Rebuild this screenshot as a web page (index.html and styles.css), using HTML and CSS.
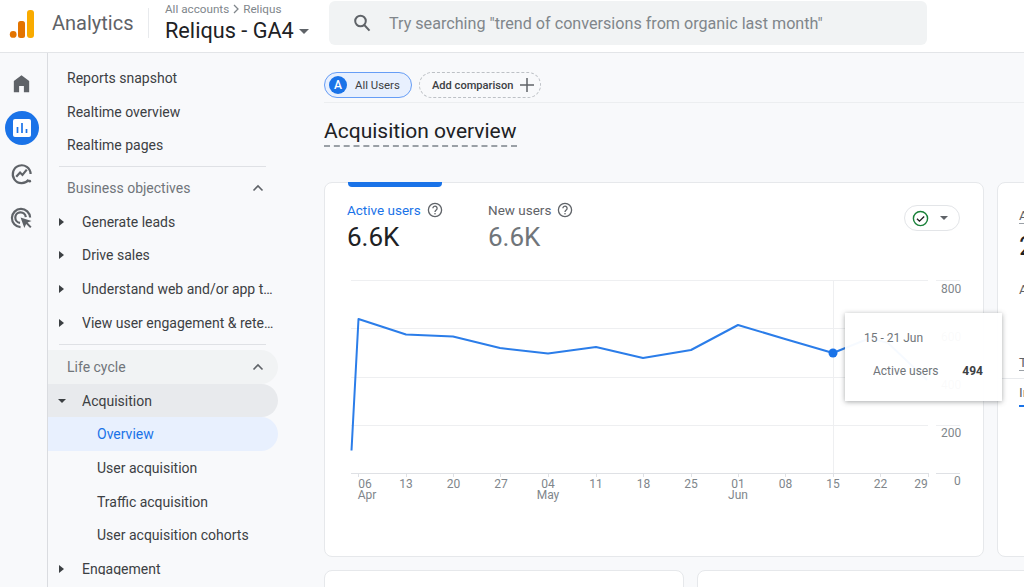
FILE: index.html
```html
<!DOCTYPE html>
<html lang="en">
<head>
<meta charset="utf-8">
<title>Analytics - Acquisition overview</title>
<link rel="stylesheet" href="styles.css">
</head>
<body>
<header class="topbar">
  <div class="brand">
    <svg class="logo" viewBox="0 0 40 44" width="40" height="44"><circle cx="13.2" cy="33.4" r="3.4" fill="#e37400"/><rect x="18" y="20" width="7" height="17" rx="2.5" fill="#e37400"/><rect x="27" y="9" width="7" height="28" rx="3" fill="#f9ab00"/></svg>
    <span class="brand-name">Analytics</span>
  </div>
  <div class="account">
    <div class="crumbs">All accounts <svg class="crumb-sep" viewBox="0 0 8 10" width="8" height="10"><path d="M2 1l4 4-4 4" fill="none" stroke="#80868b" stroke-width="1.3"/></svg> Reliqus</div>
    <div class="property">Reliqus - GA4 <span class="caret"></span></div>
  </div>
  <div class="search">
    <svg viewBox="0 0 22 22" width="22" height="22"><circle cx="9.500" cy="9" r="5.300" fill="none" stroke="#5f6368" stroke-width="2"/><path d="M13.300 13l5.200 5.700" stroke="#5f6368" stroke-width="2"/></svg>
    <span>Try searching "trend of conversions from organic last month"</span>
  </div>
</header>
<div class="body-row">
  <aside class="rail">
    <div class="rail-btn"><svg viewBox="0 0 24 24" width="23" height="23"><path d="M12 3.500L4 9.500V21h5.500v-6.500h5V21H20V9.500z" fill="#5f6368"/></svg></div>
    <div class="rail-btn rail-active"><svg viewBox="0 0 18 18" width="18" height="18"><rect width="18" height="18" rx="2" fill="#fff"/><path d="M4.500 8v6M9 4v10M13.500 10v4" stroke="#1a73e8" stroke-width="1.700"/></svg></div>
    <div class="rail-btn"><svg viewBox="0 0 24 24" width="23" height="23"><path d="M19.500 18.500A9.300 9.300 0 1 1 21.500 12.500" fill="none" stroke="#5f6368" stroke-width="2.300"/><path d="M6.500 15.500l4-4.500 2.500 2.500 4.500-5.500" fill="none" stroke="#5f6368" stroke-width="2.300"/><circle cx="20.500" cy="20" r="1.500" fill="#5f6368"/></svg></div>
    <div class="rail-btn"><svg viewBox="0 0 24 24" width="23" height="23"><path d="M11 21a9.500 9.500 0 1 1 10-10" fill="none" stroke="#5f6368" stroke-width="2.300"/><path d="M10.500 16.500a5.500 5.500 0 1 1 6-6" fill="none" stroke="#5f6368" stroke-width="2.300"/><path d="M11 11l4 11 1.800-4.200L21 22l1.500-1.500-4.200-4.200 4.200-1.800z" fill="#5f6368"/></svg></div>
  </aside>
  <nav class="nav">
    <a class="item">Reports snapshot</a>
    <a class="item">Realtime overview</a>
    <a class="item">Realtime pages</a>
    <hr class="sep">
    <div class="group">Business objectives <svg class="chev" viewBox="0 0 12 8" width="12" height="8"><path d="M1.500 6.500L6 2l4.500 4.500" fill="none" stroke="#5f6368" stroke-width="1.600"/></svg></div>
    <a class="item sub"><i class="tri"></i><span>Generate leads</span></a>
    <a class="item sub"><i class="tri"></i><span>Drive sales</span></a>
    <a class="item sub"><i class="tri"></i><span>Understand web and/or app traffic</span></a>
    <a class="item sub"><i class="tri"></i><span>View user engagement &amp; retention</span></a>
    <hr class="sep sep-wide">
    <div class="group group-open">Life cycle <svg class="chev" viewBox="0 0 12 8" width="12" height="8"><path d="M1.500 6.500L6 2l4.500 4.500" fill="none" stroke="#5f6368" stroke-width="1.600"/></svg></div>
    <a class="item sub sub-open"><i class="tri tri-down"></i><span>Acquisition</span></a>
    <a class="item leaf leaf-on">Overview</a>
    <a class="item leaf">User acquisition</a>
    <a class="item leaf">Traffic acquisition</a>
    <a class="item leaf">User acquisition cohorts</a>
    <a class="item sub"><i class="tri"></i><span>Engagement</span></a>
  </nav>
  <main class="main">
    <div class="chips">
      <div class="chip chip-user"><b class="avatar">A</b>All Users</div>
      <div class="chip chip-add"><span>Add comparison</span><svg viewBox="0 0 14 14" width="14" height="14"><path d="M7 0v14M0 7h14" stroke="#5f6368" stroke-width="1.500"/></svg></div>
    </div>
    <h1 class="title"><span>Acquisition overview</span></h1>
    <div class="cards">
      <section class="card card-chart">
        <div class="tab"></div>
        <div class="chart-head">
          <div class="metric metric-on">
            <div class="metric-label">Active users <svg class="help" viewBox="0 0 16 16" width="16" height="16"><circle cx="8" cy="8" r="6.600" fill="none" stroke="#5f6368" stroke-width="1.300"/><path d="M5.900 6.300a2.100 2.100 0 1 1 3.300 1.700c-.8.600-1.200.9-1.200 2" fill="none" stroke="#5f6368" stroke-width="1.300"/><circle cx="8" cy="11.800" r=".8" fill="#5f6368"/></svg></div>
            <div class="metric-value">6.6K</div>
          </div>
          <div class="metric">
            <div class="metric-label">New users <svg class="help" viewBox="0 0 16 16" width="16" height="16"><circle cx="8" cy="8" r="6.600" fill="none" stroke="#5f6368" stroke-width="1.300"/><path d="M5.900 6.300a2.100 2.100 0 1 1 3.300 1.700c-.8.600-1.200.9-1.200 2" fill="none" stroke="#5f6368" stroke-width="1.300"/><circle cx="8" cy="11.800" r=".8" fill="#5f6368"/></svg></div>
            <div class="metric-value">6.6K</div>
          </div>
          <div class="status">
            <svg viewBox="0 0 18 18" width="17" height="17"><circle cx="9" cy="9" r="7.500" fill="none" stroke="#188038" stroke-width="1.500"/><path d="M5.300 9.200l2.600 2.600 5-5" fill="none" stroke="#202124" stroke-width="1.400"/></svg>
            <span class="caret caret-small"></span>
          </div>
        </div>
        <svg class="chart" viewBox="324 270 660 240" width="660" height="240">
          <g stroke="#eeeff1" stroke-width="1" fill="none">
            <path d="M351 280.500H928M936 280.500H960M351 328.500H928M936 328.500H960M351 377.500H928M936 377.500H960M351 425.500H928M936 425.500H960"/>
            <path d="M833.500 280V473"/>
          </g>
          <g stroke="#dfe1e5" stroke-width="1" fill="none">
            <path d="M351 473.500H928M936 473.500H960"/>
            <path d="M358.500 473v4M406.500 473v4M453.500 473v4M500.500 473v4M548.500 473v4M596.500 473v4M643.500 473v4M691.500 473v4M738.500 473v4M785.500 473v4M833.500 473v4M880.500 473v4M928.500 473v4"/>
          </g>
          <polyline points="351.500,450.500 358.500,319 406,334.500 453,336.500 500,348 548,353.500 596,347 643,358 691,350 738,325 785,339 833,353 870,338 888,343 927,380" fill="none" stroke="#2b7de9" stroke-width="2" stroke-linejoin="round"/>
          <circle cx="833" cy="353" r="4.500" fill="#1a73e8"/>
          <g class="axis">
            <text x="941" y="293">800</text>
            <text x="941" y="341">600</text>
            <text x="941" y="389">400</text>
            <text x="941" y="437">200</text>
            <text x="954" y="485">0</text>
          </g>
          <g class="axis axis-x">
            <text x="365" y="488">06</text><text x="367" y="499">Apr</text>
            <text x="406" y="488">13</text>
            <text x="453.500" y="488">20</text>
            <text x="501" y="488">27</text>
            <text x="548" y="488">04</text><text x="548" y="499">May</text>
            <text x="596" y="488">11</text>
            <text x="643.500" y="488">18</text>
            <text x="691" y="488">25</text>
            <text x="738" y="488">01</text><text x="738" y="499">Jun</text>
            <text x="785.500" y="488">08</text>
            <text x="833" y="488">15</text>
            <text x="880.500" y="488">22</text>
            <text x="921" y="488">29</text>
          </g>
        </svg>
        <div class="tip">
          <div class="tip-date">15 - 21 Jun</div>
          <div class="tip-row"><span>Active users</span><b>494</b></div>
        </div>
      </section>
      <section class="card card-side">
        <div class="side-label side-under">Active users</div>
        <div class="side-value">2.1K</div>
        <div class="side-label side-gap">Active users</div>
        <div class="side-label side-under side-gap2">Top</div>
        <hr class="side-rule">
        <div class="side-label side-gap3">Interaction</div>
        <div class="side-bar"></div>
      </section>
    </div>
    <div class="cards cards-low">
      <section class="card card-low"></section>
      <section class="card card-low-wide"></section>
    </div>
  </main>
</div>
</body>
</html>
```

FILE: styles.css
```css
* { box-sizing: border-box; }
html, body { margin: 0; height: 100%; overflow: hidden; }
body { font-family: Roboto, "Liberation Sans", sans-serif; background: #f8f9fb; color: #3c4043; }

.topbar { height: 53px; background: #fff; border-bottom: 1px solid #e3e5e8; display: flex; align-items: flex-start; }
.brand { width: 149px; height: 46px; display: flex; align-items: center; position: relative; }
.brand::after { content: ""; position: absolute; left: 148px; top: 8px; height: 30px; width: 1px; background: #e8eaed; }
.logo { flex: none; }
.brand-name { margin-left: 12px; font-size: 20px; color: #5f6368; }
.account { margin-left: 16px; width: 164px; }
.crumbs { font-size: 11.700px; color: #80868b; margin-top: 2px; line-height: 14px; display: flex; align-items: center; gap: 3px; }
.crumb-sep { flex: none; }
.property { font-size: 21.700px; line-height: 26px; margin-top: 2px; color: #202124; white-space: nowrap; }
.caret { display: inline-block; width: 0; height: 0; border: 5px solid transparent; border-top-color: #5f6368; border-bottom-width: 0; vertical-align: 4px; }
.search { margin-top: 1px; width: 598px; height: 44px; background: #f1f3f4; border-radius: 6px; display: flex; align-items: center; padding-left: 22px; font-size: 16.150px; color: #80868b; gap: 16px; white-space: nowrap; }
.search svg { flex: none; }

.body-row { display: flex; height: 534px; }
.rail { width: 48px; flex: none; border-right: 1px solid #dadce0; padding: 13px 4px 0 0; display: flex; flex-direction: column; gap: 11px; align-items: center; }
.rail-btn { width: 34px; height: 34px; display: flex; align-items: center; justify-content: center; border-radius: 50%; }
.rail-active { background: #1a73e8; }

.nav { width: 252px; flex: none; height: 522px; overflow: hidden; padding-top: 8px; font-size: 14px; font-weight: 450; }
.item, .group { height: 33.700px; display: flex; align-items: center; padding-left: 19px; color: #3c4043; white-space: nowrap; }
.sep { border: 0; border-top: 1px solid #dfe1e5; margin: 4px 34px 4px 11px; height: 0; }
.sep-wide { margin-top: 4.500px; margin-bottom: 5px; }
.group { color: #70757a; width: 230px; justify-content: space-between; padding-right: 14px; }
.group-open { background: #f1f3f4; border-radius: 0 17px 17px 0; }
.sub { padding-left: 11px; width: 230px; }
.sub span { margin-left: 18px; width: 193px; overflow: hidden; text-overflow: ellipsis; }
.tri { width: 0; height: 0; flex: none; border: 4px solid transparent; border-left: 5px solid #3c4043; border-right-width: 0; }
.tri-down { border: 4px solid transparent; border-top: 4px solid #3c4043; border-bottom-width: 0; margin-left: -1px; margin-right: -2px; }
.sub-open { background: #e8eaed; border-radius: 0 17px 17px 0; }
.leaf { padding-left: 49px; width: 230px; }
.leaf-on { background: #e8f0fe; color: #1a73e8; border-radius: 0 17px 17px 0; }

.main { flex: 1; min-width: 0; padding: 19px 0 0 24px; overflow: hidden; }
.chips { display: flex; gap: 7px; height: 31px; border-bottom: 1px solid #eceef0; align-items: flex-start; }
.chip { height: 26px; border-radius: 13px; display: flex; align-items: center; font-size: 12px; font-weight: 500; white-space: nowrap; flex: none; }
.chip-user { width: 88px; background: #e8f0fe; border: 1px solid #669df6; padding-left: 4px; color: #3c4043; font-weight: 400; font-size: 11.400px; gap: 8px; }
.avatar { width: 18px; height: 18px; border-radius: 50%; background: #1a73e8; color: #fff; font-size: 12px; font-weight: 500; display: flex; align-items: center; justify-content: center; }
.chip-add { width: 122px; border: 1px dashed #bdc1c6; padding-left: 12px; gap: 6px; color: #3c4043; font-size: 11.100px; }
.chip-add svg { flex: none; }
.title { margin: 14px 0 0; height: 65px; font-size: 21px; font-weight: 400; line-height: 29px; color: #202124; }
.title span { display: inline-block; border-bottom: 2px dashed #9aa0a6; height: 30px; }

.cards { display: flex; gap: 13px; }
.card { background: #fff; border: 1px solid #e6e8eb; border-radius: 8px; flex: none; position: relative; }
.card-chart { width: 660px; height: 375px; z-index: 1; }
.tab { position: absolute; left: 23px; top: -1px; width: 94px; height: 5px; background: #1a73e8; border-radius: 0 0 4px 4px; }
.chart-head { height: 87px; display: flex; padding: 18px 23px 0 22px; }
.metric { width: 141px; }
.metric-label { font-size: 13.500px; color: #5f6368; display: flex; align-items: center; gap: 6px; height: 18px; }
.metric-on .metric-label { color: #1a73e8; }
.metric-value { font-size: 26px; color: #70757a; line-height: 32px; margin-top: 2px; }
.metric-on .metric-value { color: #202124; }
.help { flex: none; }
.status { margin-left: auto; margin-top: 4px; width: 56px; height: 26px; border: 1px solid #e3e5e8; border-radius: 13px; display: flex; align-items: center; padding-left: 7px; gap: 11px; }
.caret-small { vertical-align: 0; border-width: 4px 4px 0; }
.chart { display: block; margin-left: -1px; }
.axis text { font-size: 12px; fill: #80868b; }
.axis-x text { text-anchor: middle; }
.tip { position: absolute; left: 520px; top: 130px; width: 157px; height: 88px; background: rgba(255,255,255,.96); box-shadow: 0 1px 5px rgba(60,64,67,.45); padding: 18px 19px 0; font-size: 12px; color: #70757a; }
.tip-date { line-height: 14px; }
.tip-row { display: flex; justify-content: space-between; margin-top: 19px; padding-left: 9px; line-height: 14px; }
.tip-row b { color: #3c4043; font-weight: 700; }

.card-side { width: 300px; height: 375px; padding: 22px 0 0 21px; overflow: hidden; }
.side-label { font-size: 13.500px; color: #5f6368; line-height: 15px; white-space: nowrap; }
.side-under { display: inline-block; border-bottom: 1px solid #9aa0a6; }
.side-value { font-size: 26px; color: #202124; line-height: 32px; margin-top: 6px; }
.side-gap { margin-top: 20px; }
.side-gap2 { margin-top: 58px; }
.side-rule { border: 0; border-top: 1px solid #e8eaed; margin: 7px 0 0 -21px; }
.side-gap3 { margin-top: 6px; }
.side-bar { width: 40px; height: 2px; background: #1a73e8; margin-top: 5px; }

.cards-low { margin-top: 13px; }
.card-low { width: 360px; height: 80px; }
.card-low-wide { width: 400px; height: 80px; }
```
